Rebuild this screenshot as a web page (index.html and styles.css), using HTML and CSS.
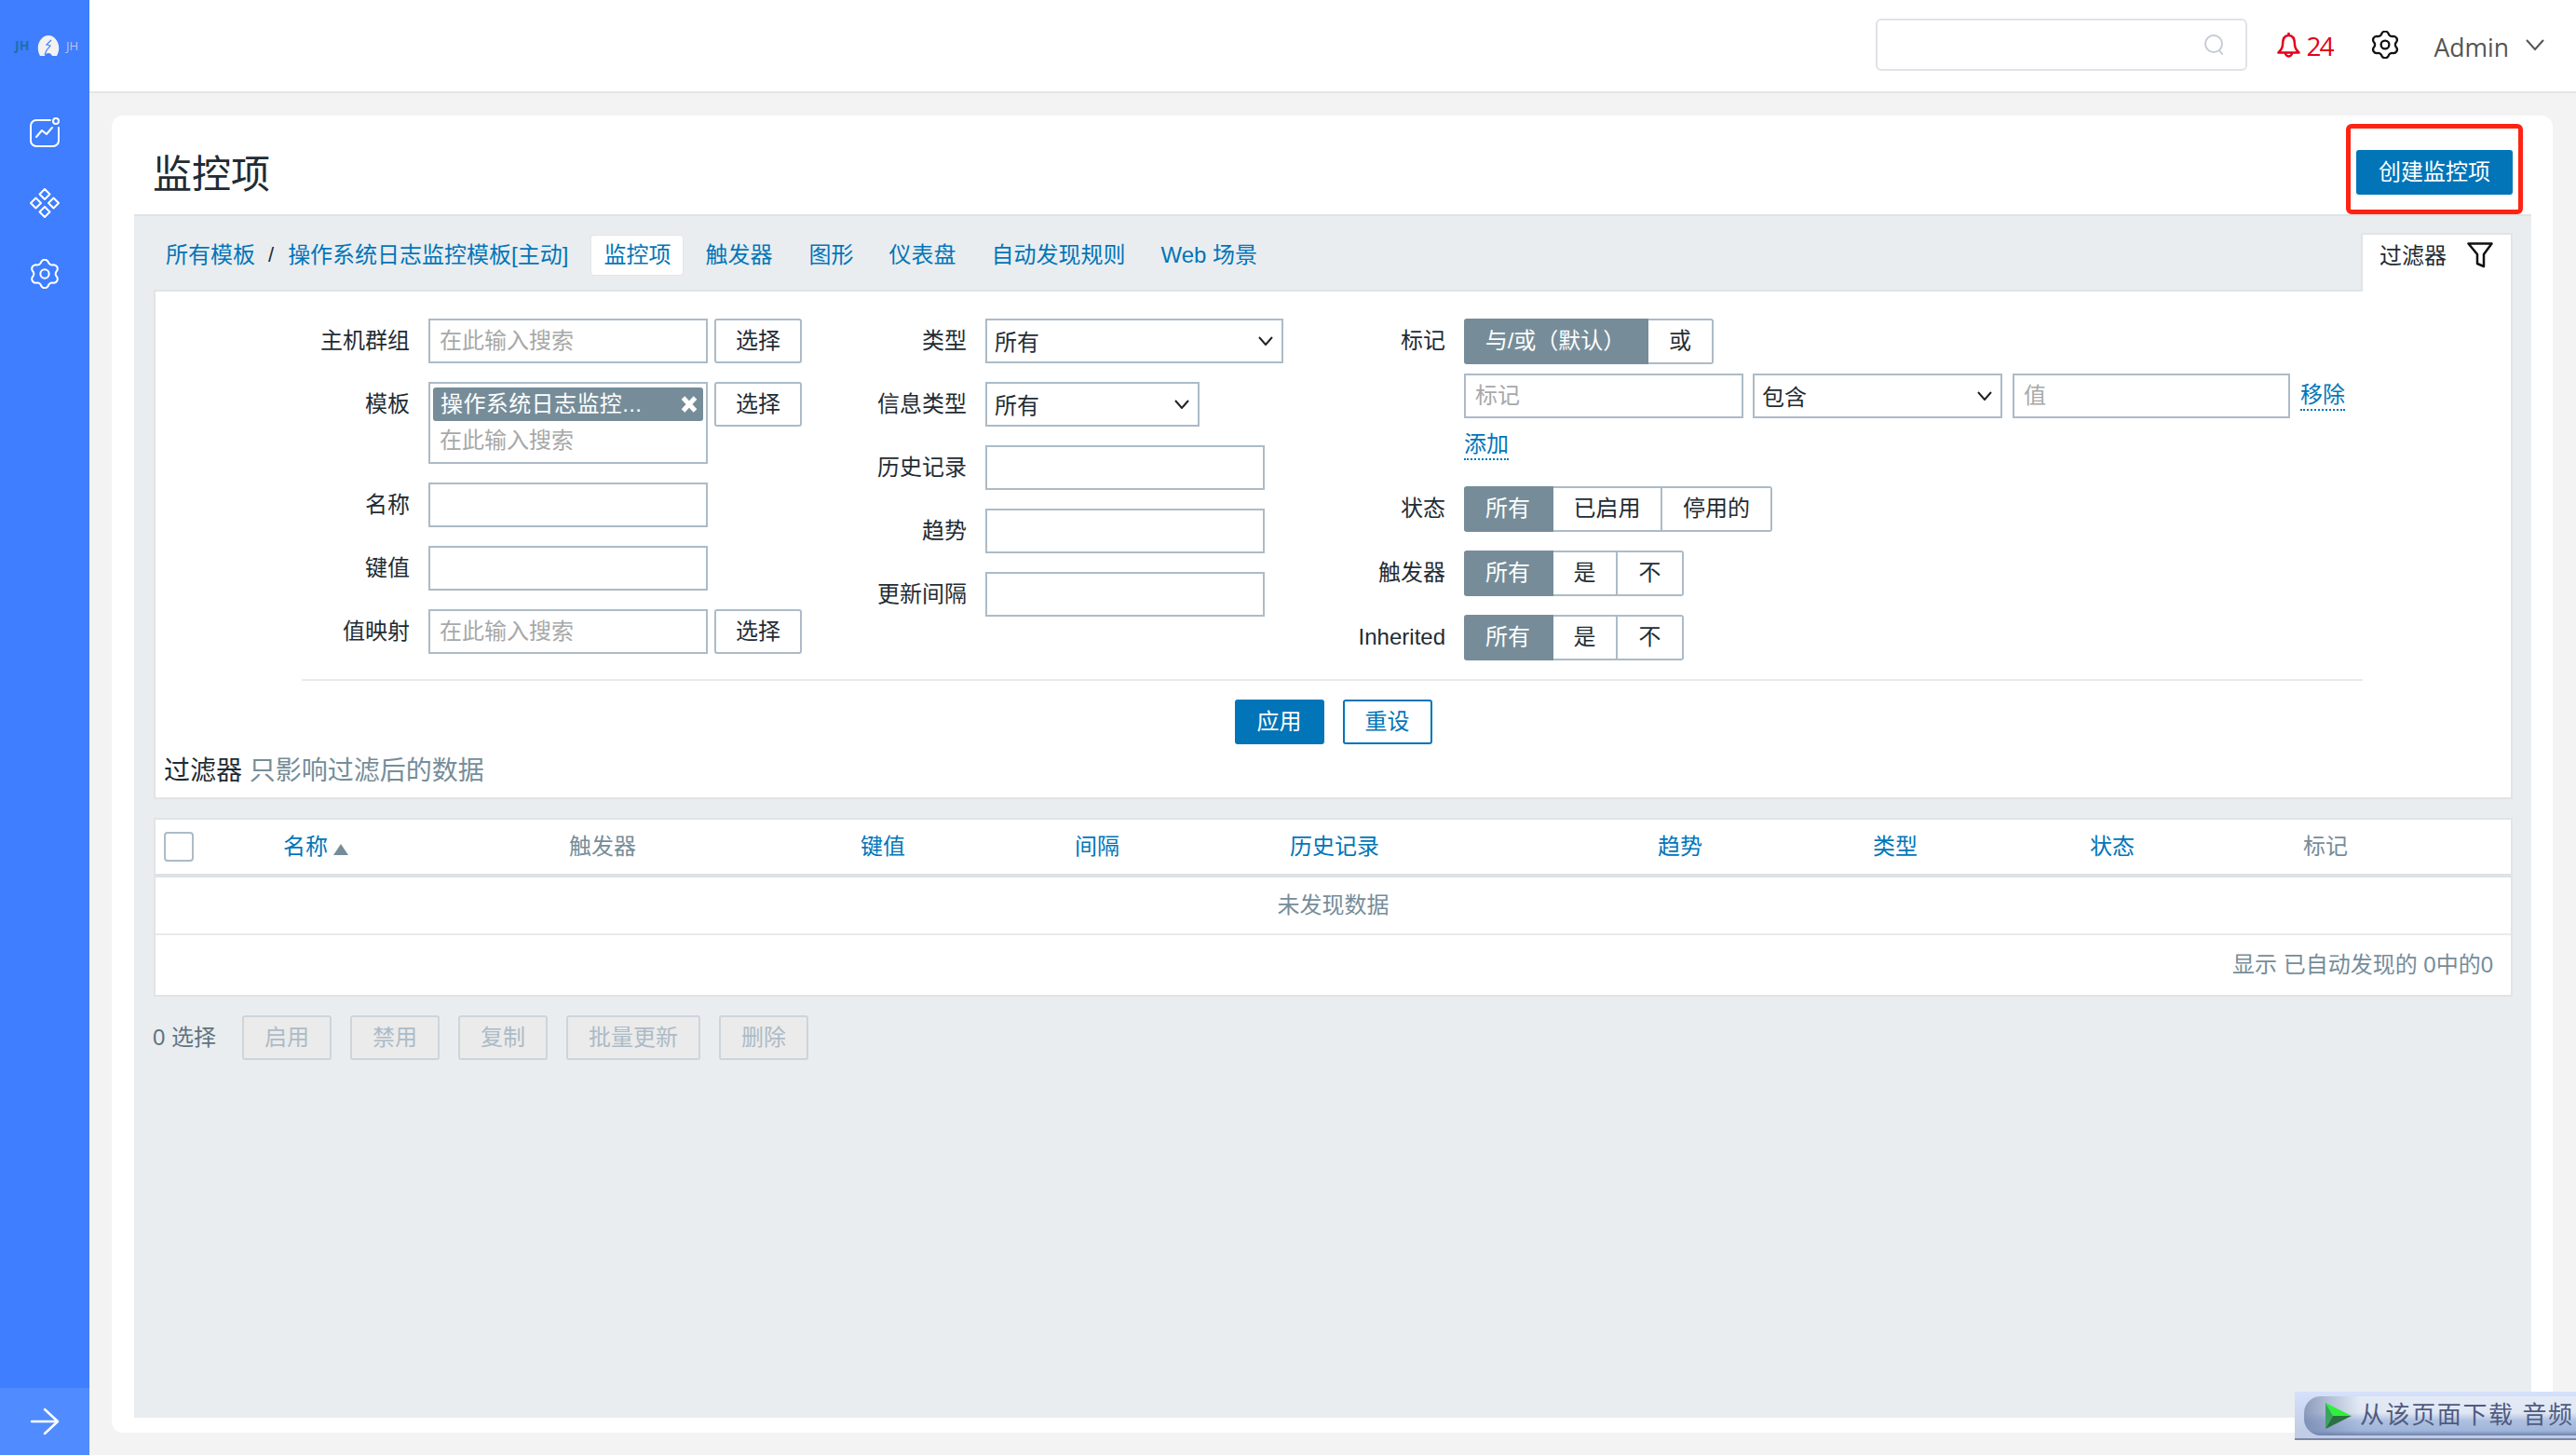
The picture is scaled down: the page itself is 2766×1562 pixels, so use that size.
FILE: index.html
```html
<!DOCTYPE html>
<html lang="zh">
<head>
<meta charset="utf-8">
<title>监控项</title>
<link rel="stylesheet" href="styles.css">
</head>
<body>
<aside class="sidebar">
  <div class="logo">
    <span class="logo-l">JH</span>
    <svg class="logo-mark" width="26" height="22" viewBox="0 0 26 22"><path d="M4 22C-2 11 5 0 13 0s15 11 9 22h-5c-1-2-2-3-4-3s-3 1-4 3z" fill="#f2f2f2"/><path d="M16 5l-5 5 4 1-4 5-2 5" fill="none" stroke="#3e7eff" stroke-width="1.2"/></svg>
    <span class="logo-r">JH</span>
  </div>
  <nav class="side-nav">
    <svg class="side-icon" width="32" height="32" viewBox="0 0 32 32" fill="none" stroke="#fff" stroke-width="2" stroke-linecap="round" stroke-linejoin="round"><path d="M22 3H7a6 6 0 0 0-6 6v16a6 6 0 0 0 6 6h18a6 6 0 0 0 6-6V11"/><circle cx="28" cy="4" r="3"/><path d="M7 21l6-7 5 4 6-7"/></svg>
    <svg class="side-icon" width="32" height="32" viewBox="0 0 32 32" fill="none" stroke="#fff" stroke-width="2" stroke-linejoin="round"><path d="M16 1l5.500 5.500L16 12l-5.500-5.500zM6.500 10.500l5.500 5.500-5.500 5.500L1 16zM25.500 10.500L31 16l-5.500 5.500L20 16zM16 20l5.500 5.500L16 31l-5.500-5.500z"/></svg>
    <svg class="side-icon" width="32" height="32" viewBox="1 1 22 22" fill="none" stroke="#fff" stroke-width="1.400" stroke-linejoin="round"><path d="M9.440 3.060A2.900 2.900 0 0 1 14.560 3.060A3 3 0 0 0 18.460 5.310A2.900 2.900 0 0 1 21.020 9.750A3 3 0 0 0 21.020 14.250A2.900 2.900 0 0 1 18.460 18.690A3 3 0 0 0 14.560 20.940A2.900 2.900 0 0 1 9.440 20.940A3 3 0 0 0 5.540 18.690A2.900 2.900 0 0 1 2.980 14.250A3 3 0 0 0 2.980 9.750A2.900 2.900 0 0 1 5.540 5.310A3 3 0 0 0 9.440 3.060Z"/><circle cx="12" cy="12" r="3.200"/></svg>
  </nav>
  <div class="side-foot">
    <svg width="32" height="30" viewBox="0 0 32 30" fill="none" stroke="#fff" stroke-width="2.500" stroke-linecap="round" stroke-linejoin="round"><path d="M2 15h28M16 2l14 13-14 13"/></svg>
  </div>
</aside>

<div class="main">
  <header class="topbar">
    <div class="search">
      <svg width="24" height="24" viewBox="0 0 24 24" fill="none" stroke="#c5ccd4" stroke-width="2" stroke-linecap="round"><circle cx="11" cy="11" r="9"/><path d="M17 18l3 4"/></svg>
    </div>
    <div class="alerts">
      <svg width="25" height="29" viewBox="0 0 25 29" fill="none" stroke="#e3001b" stroke-width="2.500" stroke-linejoin="round"><path d="M12.500 4C7 4 6 9 6 14c0 4-2 6-4.500 8.500h22C21 20 19 18 19 14c0-5-1-10-6.500-10zM12.500 1v3M9 23a3.500 3.500 0 0 0 7 0"/></svg>
      <span class="alert-num">24</span>
    </div>
    <svg class="top-gear" width="30" height="30" viewBox="1 1 22 22" fill="none" stroke="#111" stroke-width="1.700" stroke-linejoin="round"><path d="M9.440 3.060A2.900 2.900 0 0 1 14.560 3.060A3 3 0 0 0 18.460 5.310A2.900 2.900 0 0 1 21.020 9.750A3 3 0 0 0 21.020 14.250A2.900 2.900 0 0 1 18.460 18.690A3 3 0 0 0 14.560 20.940A2.900 2.900 0 0 1 9.440 20.940A3 3 0 0 0 5.540 18.690A2.900 2.900 0 0 1 2.980 14.250A3 3 0 0 0 2.980 9.750A2.900 2.900 0 0 1 5.540 5.310A3 3 0 0 0 9.440 3.060Z"/><circle cx="12" cy="12" r="3.200"/></svg>
    <span class="user">Admin</span>
    <svg width="20" height="13" viewBox="0 0 20 13" fill="none" stroke="#555" stroke-width="2"><path d="M1 1l9 10 9-10"/></svg>
  </header>

  <main class="card">
    <div class="card-head">
      <h1 class="title">监控项</h1>
      <div class="create-wrap"><button class="btn-primary btn-create">创建监控项</button></div>
    </div>

    <section class="panel">
      <div class="tabs-row">
        <a class="link crumb">所有模板</a>
        <span class="crumb-sep">/</span>
        <a class="link crumb crumb-tpl">操作系统日志监控模板[主动]</a>
        <a class="link tab tab-active">监控项</a>
        <a class="link tab tab-trigger">触发器</a>
        <a class="link tab tab-graph">图形</a>
        <a class="link tab tab-dash">仪表盘</a>
        <a class="link tab tab-disc">自动发现规则</a>
        <a class="link tab tab-web">Web 场景</a>
        <div class="filter-tab">
          <span>过滤器</span>
          <svg width="28" height="28" viewBox="0 0 28 28" fill="none" stroke="#111" stroke-width="2.500" stroke-linejoin="round"><path d="M1.500 1.500h25L18 13v13l-7-3V13z"/></svg>
        </div>
      </div>

      <div class="filter">
        <div class="filter-cols">
          <div class="col col-1">
            <label class="lbl">主机群组</label>
            <div class="field-row"><input class="inp inp-wide" placeholder="在此输入搜索"><button class="btn">选择</button></div>
            <label class="lbl">模板</label>
            <div class="field-row">
              <div class="multi">
                <div class="chip"><span>操作系统日志监控...</span>
                  <svg width="18" height="18" viewBox="0 0 18 18" stroke="#fff" stroke-width="5"><path d="M2.500 2l13 14M15.500 2l-13 14"/></svg>
                </div>
                <input class="multi-inp" placeholder="在此输入搜索">
              </div>
              <button class="btn">选择</button>
            </div>
            <label class="lbl">名称</label>
            <div class="field-row"><input class="inp inp-wide"></div>
            <label class="lbl">键值</label>
            <div class="field-row"><input class="inp inp-wide"></div>
            <label class="lbl">值映射</label>
            <div class="field-row"><input class="inp inp-wide" placeholder="在此输入搜索"><button class="btn">选择</button></div>
          </div>

          <div class="col col-2">
            <label class="lbl">类型</label>
            <select class="sel sel-type"><option>所有</option></select>
            <label class="lbl">信息类型</label>
            <select class="sel sel-info"><option>所有</option></select>
            <label class="lbl">历史记录</label>
            <input class="inp inp-mid">
            <label class="lbl">趋势</label>
            <input class="inp inp-mid">
            <label class="lbl">更新间隔</label>
            <input class="inp inp-mid">
          </div>

          <div class="col col-3">
            <label class="lbl lbl-seg">标记</label>
            <div class="tag-stack">
              <div class="seg">
                <button class="seg-btn on w198">与/或（默认）</button><button class="seg-btn w70">或</button>
              </div>
              <div class="tag-row">
                <input class="inp inp-tag" placeholder="标记">
                <select class="sel sel-op"><option>包含</option></select>
                <input class="inp inp-val" placeholder="值">
                <a class="link dotted">移除</a>
              </div>
              <div class="add-row"><a class="link dotted">添加</a></div>
            </div>
            <label class="lbl lbl-seg">状态</label>
            <div class="seg">
              <button class="seg-btn on w96">所有</button><button class="seg-btn w117">已启用</button><button class="seg-btn w118">停用的</button>
            </div>
            <label class="lbl lbl-seg">触发器</label>
            <div class="seg">
              <button class="seg-btn on w96">所有</button><button class="seg-btn w69">是</button><button class="seg-btn w71">不</button>
            </div>
            <label class="lbl lbl-seg">Inherited</label>
            <div class="seg">
              <button class="seg-btn on w96">所有</button><button class="seg-btn w69">是</button><button class="seg-btn w71">不</button>
            </div>
          </div>
        </div>

        <div class="filter-sep"></div>
        <div class="filter-actions">
          <button class="btn-primary btn-apply">应用</button>
          <button class="btn-outline">重设</button>
        </div>
        <div class="filter-note"><span class="note-strong">过滤器</span> 只影响过滤后的数据</div>
      </div>

      <div class="table">
        <div class="thead">
          <div class="th-check"><span class="checkbox"></span></div>
          <a class="link th-sort">名称<span class="sort-up"></span></a>
          <span class="muted">触发器</span>
          <a class="link">键值</a>
          <a class="link">间隔</a>
          <a class="link">历史记录</a>
          <a class="link">趋势</a>
          <a class="link">类型</a>
          <a class="link">状态</a>
          <span class="muted">标记</span>
        </div>
        <div class="empty">未发现数据</div>
        <div class="tfoot">显示 已自动发现的 0中的0</div>
      </div>

      <div class="bulk">
        <span class="bulk-count">0 选择</span>
        <button class="btn-off">启用</button>
        <button class="btn-off">禁用</button>
        <button class="btn-off">复制</button>
        <button class="btn-off btn-off-wide">批量更新</button>
        <button class="btn-off">删除</button>
      </div>
    </section>
  </main>
</div>

<div class="dl-bar">
  <div class="dl-pill">
    <svg width="28" height="28" viewBox="0 0 28 28"><path d="M0 0l8 14L28 14z" fill="#2cf23a"/><path d="M0 0v28l8-14z" fill="#3aa35f"/><path d="M0 28l8-14h20z" fill="#2a7040"/></svg>
    <span class="dl-text">从该页面下载 音频</span>
  </div>
</div>
</body>
</html>
```

FILE: styles.css
```css
* { box-sizing: border-box; }
html, body { height: 100%; }
body {
  margin: 0;
  display: flex;
  height: 100vh;
  overflow: hidden;
  background: #f3f3f3;
  color: #1f2c33;
  font: 24px/36px "Liberation Sans", "Noto Sans CJK SC", sans-serif;
}
button, input, select {
  font: inherit;
  color: inherit;
  margin: 0;
  outline: 0;
}
input::placeholder { color: #a8a8a8; opacity: 1; }

/* Sidebar */
.sidebar {
  width: 96px;
  flex: none;
  display: flex;
  flex-direction: column;
  background: #3e7eff;
}
.logo {
  height: 98px;
  display: flex;
  align-items: center;
  padding-left: 16px;
  font: 13px/16px "Open Sans", sans-serif;
}
.logo-l { width: 23px; color: #1f6fa8; font-weight: 700; font-size: 14px; }
.logo-r { margin-left: 6px; color: #b8c6e4; }
.side-nav {
  display: flex;
  flex-direction: column;
  align-items: center;
  gap: 44px;
  padding-top: 28px;
}
.side-foot {
  margin-top: auto;
  height: 72px;
  background: #508bff;
  display: flex;
  align-items: center;
  justify-content: center;
}

/* Top bar */
.main {
  flex: 1;
  min-width: 0;
  display: flex;
  flex-direction: column;
}
.topbar {
  height: 100px;
  flex: none;
  display: flex;
  align-items: center;
  justify-content: flex-end;
  padding: 0 34px 2px 0;
  background: #fff;
  border-bottom: 2px solid #e4e6e8;
}
.search {
  width: 399px;
  height: 56px;
  margin-right: 32px;
  padding-right: 21px;
  display: flex;
  align-items: center;
  justify-content: flex-end;
  border: 2px solid #dfe3e8;
  border-radius: 6px;
}
.alerts {
  display: flex;
  align-items: center;
  gap: 7px;
  color: #e3001b;
  font: 28px/36px "Open Sans", sans-serif;
  letter-spacing: -2px;
}
.alert-num { margin-top: 2px; }
.top-gear { margin-left: 41px; }
.user {
  margin-left: 38px;
  margin-right: 18px;
  margin-top: 5px;
  color: #555;
  font: 26.500px/36px "Open Sans", sans-serif;
}

/* Card */
.card {
  flex: 1;
  min-height: 0;
  margin: 24px 25px 24px 24px;
  padding: 0 23px 16px 24px;
  display: flex;
  flex-direction: column;
  background: #fff;
  border-radius: 12px;
}
.card-head {
  height: 106px;
  flex: none;
  padding: 16px 20px 0 20px;
  display: flex;
  align-items: center;
  justify-content: space-between;
}
.title {
  margin: 0;
  padding-top: 5px;
  font-size: 42px;
  line-height: 56px;
  font-weight: 400;
}
.create-wrap { position: relative; }
.create-wrap::after {
  content: "";
  position: absolute;
  inset: -28px -11px -21px;
  border: 5px solid #ff2314;
  border-radius: 6px;
  pointer-events: none;
}
.btn-primary {
  height: 48px;
  border: 0;
  border-radius: 3px;
  background: #0275b8;
  color: #fff;
  padding: 0;
}
.btn-create { width: 168px; display: block; }
.btn-apply { width: 96px; }

/* Panel */
.panel {
  flex: 1;
  min-height: 0;
  padding: 0 20px 0 21px;
  background: #eaedf0;
  border-top: 2px solid #dfe3e6;
}
.tabs-row {
  height: 79px;
  padding-top: 18px;
  display: flex;
  align-items: flex-start;
  position: relative;
  z-index: 1;
}
.link { color: #0275b8; text-decoration: none; }
.crumb, .tab { margin-top: 3px; line-height: 42px; white-space: nowrap; }
.crumb { margin-left: 13px; }
.crumb-tpl { margin-left: 0; }
.crumb-sep { margin: 3px 15px 0 14px; line-height: 42px; font-size: 22px; }
.tab-active {
  margin-left: 25px;
  padding: 0 13px;
  width: 98px;
  background: #fff;
  border-radius: 3px;
  box-shadow: 0 0 0 1px #e2e6e9;
}
.tab-trigger { margin-left: 24px; }
.tab-graph { margin-left: 39px; }
.tab-dash { margin-left: 38px; }
.tab-disc { margin-left: 38px; }
.tab-web { margin-left: 38px; }
.filter-tab {
  margin-left: auto;
  width: 163px;
  height: 63px;
  padding: 5px 0 0 18px;
  display: flex;
  align-items: flex-start;
  gap: 22px;
  background: #fff;
  border: 2px solid #e0e4e7;
  border-bottom: 0;
  border-radius: 3px 3px 0 0;
}
.filter-tab svg { margin-top: 3px; }

/* Filter */
.filter {
  height: 547px;
  background: #fff;
  border: 2px solid #e0e4e7;
}
.filter-cols {
  display: flex;
  align-items: flex-start;
  padding-top: 29px;
}
.col { display: grid; row-gap: 20px; column-gap: 20px; }
.col-1 { width: 694px; grid-template-columns: 273px auto; }
.col-2 { width: 517px; grid-template-columns: 177px 320px; justify-items: start; }
.col-3 { grid-template-columns: 174px auto; }
.lbl {
  line-height: 48px;
  text-align: right;
  justify-self: end;
  white-space: nowrap;
}
.lbl-seg { line-height: 48px; }
.field-row { display: flex; align-items: flex-start; gap: 7px; }
.inp {
  height: 48px;
  padding: 0 10px;
  background: #fff;
  border: 2px solid #acbbc7;
  border-radius: 0;
}
.inp-wide { width: 300px; flex: none; }
.inp-tag { width: 300px; flex: none; margin-right: -1px; }
.inp-mid { width: 300px; }
.inp-val { width: 298px; flex: none; }
.btn {
  width: 94px;
  height: 48px;
  padding: 0;
  flex: none;
  background: #fff;
  border: 2px solid #acbbc7;
  border-radius: 3px;
}
.multi {
  width: 300px;
  height: 88px;
  flex: none;
  padding: 4px 3px 0;
  border: 2px solid #acbbc7;
  background: #fff;
}
.chip {
  height: 36px;
  padding: 0 6px 0 8px;
  display: flex;
  align-items: center;
  justify-content: space-between;
  background: #768d99;
  color: #fff;
  border-radius: 3px;
  letter-spacing: .400px;
}
.multi-inp {
  width: 100%;
  height: 42px;
  padding: 0 7px;
  border: 0;
  background: transparent;
}
.sel {
  height: 48px;
  padding: 3px 30px 0 8px;
  appearance: none;
  -webkit-appearance: none;
  border: 2px solid #acbbc7;
  border-radius: 0;
  background: #fff url("data:image/svg+xml,%3Csvg xmlns='http://www.w3.org/2000/svg' width='16' height='10' viewBox='0 0 16 10'%3E%3Cpath d='M1 1l7 8 7-8' fill='none' stroke='%23222' stroke-width='2'/%3E%3C/svg%3E") no-repeat right 9px center;
}
.sel-type { width: 320px; }
.sel-info { width: 230px; }
.sel-op { width: 268px; flex: none; }
.tag-stack {
  height: 160px;
  display: flex;
  flex-direction: column;
  gap: 10px;
}
.tag-row { display: flex; align-items: center; gap: 11px; }
.add-row { line-height: 36px; }
.dotted {
  line-height: 30px;
  display: inline-block;
  border-bottom: 2px dotted #0275b8;
}
.add-row .dotted { height: 32px; }
.seg { display: flex; height: 49px; }
.seg-btn {
  height: 49px;
  padding: 0 0 2px;
  background: #fff;
  border: 2px solid #acbbc7;
  border-left-width: 0;
}
.seg-btn.on {
  background: #768d99;
  border-color: #768d99;
  border-radius: 3px 0 0 3px;
  color: #fff;
}
.seg-btn:last-child { border-radius: 0 3px 3px 0; }
.w198 { width: 198px; }
.w70 { width: 70px; }
.w96 { width: 96px; }
.w117 { width: 117px; }
.w118 { width: 118px; }
.w69 { width: 69px; }
.w71 { width: 71px; }
.filter-sep {
  height: 2px;
  margin: 20px 159px 0 157px;
  background: #e8ebee;
}
.filter-actions {
  margin-top: 20px;
  display: flex;
  justify-content: center;
  gap: 20px;
}
.btn-outline {
  width: 96px;
  height: 48px;
  padding: 0;
  background: #fff;
  color: #0275b8;
  border: 2px solid #0275b8;
  border-radius: 3px;
}
.filter-note {
  margin-top: 9px;
  padding-left: 9px;
  font-size: 28px;
  line-height: 40px;
  color: #768d99;
}
.note-strong { color: #1f2c33; }

/* Table */
.table {
  margin-top: 20px;
  background: #fff;
  border: 2px solid #e0e4e7;
}
.thead {
  height: 62px;
  display: grid;
  grid-template-columns: 137px 307px 313px 230px 231px 395px 231px 233px 229px 1fr;
  align-items: center;
  border-bottom: 4px solid #dde2e6;
  line-height: 36px;
}
.th-check { padding-left: 9px; display: flex; }
.checkbox {
  width: 32px;
  height: 32px;
  background: #fff;
  border: 2px solid #acbbc7;
  border-radius: 4px;
}
.th-sort { display: flex; align-items: center; gap: 6px; }
.sort-up {
  width: 0;
  height: 0;
  margin-top: 6px;
  border-left: 8px solid transparent;
  border-right: 8px solid transparent;
  border-bottom: 12px solid #768d99;
}
.muted { color: #768d99; }
.empty {
  height: 62px;
  line-height: 60px;
  text-align: center;
  color: #768d99;
  border-bottom: 2px solid #e8ebee;
}
.tfoot {
  height: 64px;
  padding-right: 19px;
  line-height: 64px;
  text-align: right;
  color: #768d99;
}

/* Bulk */
.bulk {
  margin: 20px 0 0 -1px;
  display: flex;
  align-items: center;
  gap: 20px;
}
.bulk-count { width: 76px; color: #5f7480; white-space: nowrap; }
.btn-off {
  width: 96px;
  height: 48px;
  padding: 0;
  background: #ebebeb;
  color: #acbbc7;
  border: 2px solid #cdd5db;
  border-radius: 3px;
}
.btn-off-wide { width: 144px; }

/* Download bar overlay */
.dl-bar {
  position: fixed;
  right: 0;
  bottom: 16px;
  width: 302px;
  height: 52px;
  padding: 5px 0 0 10px;
  overflow: hidden;
  background: linear-gradient(#d6e1fb, #c0cde4 85%);
  border-bottom: 2px solid #7d86ab;
}
.dl-pill {
  height: 42px;
  padding-left: 23px;
  display: flex;
  align-items: center;
  gap: 9px;
  border-radius: 18px 0 0 18px;
  background:
    linear-gradient(90deg, rgba(112,130,170,.75), rgba(140,155,190,0) 60px),
    linear-gradient(#e4ebf6 0, #e0e7f3 42%, #aec0e0 62%, #a0b5da 88%, #6f82ae 100%);
  white-space: nowrap;
}
.dl-text {
  margin-top: -2px;
  color: #4f5b82;
  font-size: 26px;
  line-height: 36px;
  letter-spacing: 1.600px;
}
```
